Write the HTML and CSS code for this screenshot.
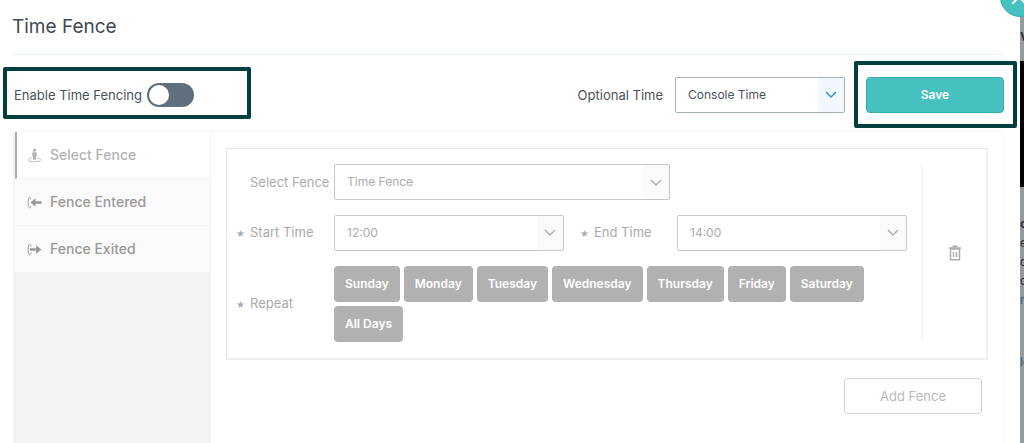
FILE: index.html
```
<!DOCTYPE html>
<html lang="en">
<head>
    <meta charset="UTF-8">
    <meta name="viewport" content="width=device-width, initial-scale=1.0">
    <title>Time Fence</title>
    <link rel="stylesheet" href="styles.css">
</head>
<body>
    <main class="modal">
        <header class="modal-header">
            <h1>Time Fence</h1>
        </header>

        <div class="toolbar">
            <div class="highlight highlight-toggle">
                <label for="enable">Enable Time Fencing</label>
                <input type="checkbox" id="enable" class="toggle" role="switch">
            </div>
            <div class="toolbar-right">
                <label for="optional-time">Optional Time</label>
                <div class="select select-active">
                    <select id="optional-time">
                        <option>Console Time</option>
                    </select>
                    <svg viewBox="0 0 26 34"><path d="M8 14l5 5 5-5"/></svg>
                </div>
                <div class="highlight highlight-save">
                    <button type="button" class="btn-save">Save</button>
                </div>
            </div>
        </div>

        <section class="panel">
            <nav class="tabs">
                <button type="button" class="tab active">
                    <svg viewBox="0 0 16 16">
                        <circle cx="8" cy="2.3" r="1.7"/>
                        <path d="M6.2 4.4h3.6l.6.6v4H9.7v3.6H6.3V9h-.7V5z"/>
                        <path class="line" d="M5 10.800c-2.200.4-3.700 1-3.700 1.800 0 1.200 3 2 6.700 2s6.700-.8 6.700-2c0-.8-1.500-1.400-3.700-1.800"/>
                    </svg>
                    Select Fence
                </button>
                <button type="button" class="tab">
                    <svg viewBox="0 0 16 16">
                        <path class="line" d="M4 4.200C3.600 1 1.200 1.400 1.200 8s2.400 7 2.800 3.800"/>
                        <path d="M3.600 8l5.400-4.600v3.200h6.500v2.800H9v3.200z"/>
                    </svg>
                    Fence Entered
                </button>
                <button type="button" class="tab">
                    <svg viewBox="0 0 16 16">
                        <path class="line" d="M4.400 5C3.800 1 1.200 1.400 1.200 8s2.600 7 3.200 3"/>
                        <path d="M15.300 8L9.800 3.400v3.200H3v2.800h6.800v3.200z"/>
                    </svg>
                    Fence Exited
                </button>
            </nav>

            <div class="content">
                <div class="card">
                    <form class="fence-form">
                        <div class="row">
                            <label class="row-label" for="fence">Select Fence</label>
                            <div class="select select-fence">
                                <select id="fence">
                                    <option>Time Fence</option>
                                </select>
                                <svg viewBox="0 0 26 34"><path d="M8 15l5 5 5-5"/></svg>
                            </div>
                        </div>
                        <div class="row">
                            <label class="row-label required" for="start">Start Time</label>
                            <div class="select">
                                <select id="start">
                                    <option>12:00</option>
                                </select>
                                <svg viewBox="0 0 26 34"><path d="M8 14l5 5 5-5"/></svg>
                            </div>
                            <label class="row-label row-label-end required" for="end">End Time</label>
                            <div class="select">
                                <select id="end">
                                    <option>14:00</option>
                                </select>
                                <svg viewBox="0 0 26 34"><path d="M8 14l5 5 5-5"/></svg>
                            </div>
                        </div>
                        <div class="row">
                            <span class="row-label required" id="repeat">Repeat</span>
                            <div class="days" role="group" aria-labelledby="repeat">
                                <button type="button">Sunday</button>
                                <button type="button">Monday</button>
                                <button type="button">Tuesday</button>
                                <button type="button">Wednesday</button>
                                <button type="button">Thursday</button>
                                <button type="button">Friday</button>
                                <button type="button">Saturday</button>
                                <button type="button">All Days</button>
                            </div>
                        </div>
                    </form>
                    <div class="card-actions">
                        <button type="button" class="btn-delete" aria-label="Delete">
                            <svg viewBox="0 0 12 16">
                                <path d="M1.500 4h9v10.700h-9zM0 3h12M3.500 1.200h5M4.500 7v5M7.500 7v5"/>
                            </svg>
                        </button>
                    </div>
                </div>
                <button type="button" class="btn-add">Add Fence</button>
            </div>
        </section>

        <button type="button" class="btn-close" aria-label="Close">
            <svg viewBox="0 0 12 12"><path d="M1 1l10 10M11 1L1 11"/></svg>
        </button>
    </main>

    <!-- Page behind the modal -->
    <aside class="backdrop">
        <b class="backdrop-title">V</b>
        <div class="backdrop-media"></div>
        <div class="backdrop-text">
            <b>o</b>
            <span>ev</span>
            <span>o</span>
            <span>o</span>
            <a href="#">ri</a>
        </div>
        <div class="backdrop-footer"><a href="#">l</a>o</div>
    </aside>
</body>
</html>
```

FILE: styles.css
```
* {
    box-sizing: border-box;
}
body {
    margin: 0;
    display: flex;
    min-height: 100vh;
    overflow: hidden;
    font-family: Inter, "Open Sans", sans-serif;
    font-size: 13px;
    line-height: 16px;
    color: #4a525c;
    background-color: #fff;
}
button, select {
    font: inherit;
    color: inherit;
}
button {
    cursor: pointer;
}
.modal {
    position: relative;
    flex: 1;
    min-width: 0;
    display: flex;
    flex-direction: column;
    background-color: #fff;
}
.modal-header {
    margin: 0 16px 0 12px;
    padding: 15px 0;
    border-bottom: 1px solid #e9f2f7;
}
.modal-header h1 {
    margin: 0;
    font-size: 19px;
    line-height: 24px;
    font-weight: 400;
    color: #3f4852;
}

/* Toolbar */
.toolbar {
    display: flex;
    align-items: center;
    justify-content: space-between;
    padding: 6px 3px 3px;
}
.toolbar-right {
    display: flex;
    align-items: center;
}
.toolbar-right .select {
    width: 170px;
    margin: 0 9px 0 12px;
}
.highlight {
    border: 4px solid #003f3f;
    border-radius: 2px;
}
.highlight-toggle {
    display: flex;
    align-items: center;
    justify-content: space-between;
    width: 248px;
    height: 52px;
    margin-bottom: 3px;
    padding: 3px 53px 0 7px;
}
.highlight-save {
    padding: 12px 9px 11px 8px;
}
.toggle {
    appearance: none;
    width: 47px;
    height: 24px;
    margin: 0;
    padding: 2px;
    border-radius: 12px;
    background-color: #5f6f7e;
    cursor: pointer;
}
.toggle::before {
    content: '';
    display: block;
    width: 20px;
    height: 20px;
    border-radius: 50%;
    background-color: #fff;
}
.toggle:checked::before {
    margin-left: auto;
}
.btn-save {
    display: block;
    width: 138px;
    height: 36px;
    border: 1px solid #35adad;
    border-radius: 4px;
    background-color: #47c1bf;
    color: #fff;
    font-size: 12px;
    font-weight: 600;
}

/* Select boxes */
.select {
    display: grid;
    grid-template-columns: 1fr 26px;
    height: 36px;
    border: 1px solid #c6c6c6;
    border-radius: 2px;
    overflow: hidden;
    background-color: #fff;
}
.select select {
    grid-area: 1 / 1 / 2 / 3;
    appearance: none;
    min-width: 0;
    padding: 0 32px 0 12px;
    border: 0;
    background: none;
    font-size: 12px;
}
.select svg {
    grid-area: 1 / 2;
    width: 26px;
    height: 34px;
    background-color: #fafafa;
    fill: none;
    stroke: #adadad;
    stroke-width: 1.4;
    pointer-events: none;
}
.select-active {
    border-color: #a5afbb;
}
.select-active svg {
    background-color: #f2f8fe;
    stroke: #2b8fdc;
}

/* Panel with tabs */
.panel {
    flex: 1;
    display: flex;
    margin: 0 16px 0 13px;
    border: 1px solid #f5f5f5;
    border-bottom: 0;
    color: #ababab;
}
.tabs {
    width: 197px;
    background-color: #f3f3f3;
    border-right: 1px solid #f3f3f3;
    border-left: 1px solid #f3f3f3;
}
.tab {
    display: flex;
    align-items: center;
    gap: 8px;
    width: 100%;
    height: 47px;
    padding: 0 0 0 12px;
    border: 0;
    border-bottom: 1px solid #f3f3f3;
    background-color: #fafafa;
    color: #999;
    font-size: 14px;
    font-weight: 500;
}
.tab.active {
    padding-left: 10px;
    border-left: 2px solid #acacac;
    background-color: #fff;
    color: #b3b3b3;
}
.tab svg {
    width: 15px;
    height: 15px;
    fill: currentColor;
}
.tab .line {
    fill: none;
    stroke: currentColor;
    stroke-width: 1;
}
.content {
    flex: 1;
    min-width: 0;
    padding: 16px 15px 16px 15px;
}

/* Fence card */
.card {
    display: flex;
    padding: 15px 0 16px;
    border: 1px solid #e6e6e6;
    border-width: 1px 2px 2px 1px;
    border-color: #e6e6e6 #efefef #efefef #e6e6e6;
}
.fence-form {
    flex: 1;
    display: flex;
    flex-direction: column;
    gap: 15px;
    padding: 0 15px 0 9px;
    border-right: 1px solid #f0f0f0;
}
.row {
    display: flex;
    align-items: center;
}
.row .select {
    flex: 1;
}
.row .select-fence {
    flex: 0 1 336px;
}
.row-label {
    flex: none;
    width: 98px;
    padding-left: 14px;
}
.row-label-end {
    width: 97px;
    margin-left: 16px;
}
.required {
    padding-left: 0;
}
.required::before {
    content: '★';
    display: inline-block;
    width: 14px;
    font-family: "DejaVu Sans", sans-serif;
    font-size: 10px;
}
.days {
    display: flex;
    flex-wrap: wrap;
    gap: 4px;
}
.days button {
    height: 36px;
    padding: 0 11px;
    border: 0;
    border-radius: 4px;
    background-color: #b1b1b1;
    color: #fff;
    font-size: 12px;
    font-weight: 600;
}
.card-actions {
    display: flex;
    align-items: center;
    justify-content: center;
    width: 63px;
}
.btn-delete {
    display: flex;
    padding: 0;
    border: 0;
    background: none;
}
.btn-delete svg {
    width: 12px;
    height: 16px;
    fill: none;
    stroke: #adadad;
    stroke-width: 1.5;
}
.btn-add {
    display: block;
    width: 138px;
    height: 36px;
    margin: 18px 6px 0 auto;
    border: 1px solid #d0d0d0;
    border-radius: 4px;
    background-color: #fff;
    color: #b9b9b9;
}

/* Close button sits over the modal corner */
.btn-close {
    position: absolute;
    top: -23px;
    right: -20px;
    display: flex;
    align-items: center;
    justify-content: center;
    width: 40px;
    height: 40px;
    padding: 0 3px 0 0;
    border: 1px solid #35adad;
    border-radius: 50%;
    background-color: #47c1bf;
    z-index: 1;
}
.btn-close svg {
    width: 16px;
    height: 16px;
    fill: none;
    stroke: #fff;
    stroke-width: 1.5;
}

.backdrop {
    width: 4px;
    overflow: hidden;
    background-color: #949a9d;
    box-shadow: 0 0 2px #777;
    font-size: 12px;
    line-height: 19px;
    color: #2b2f38;
}
.backdrop a {
    color: #2a5f8f;
    text-decoration: none;
}
.backdrop-title {
    display: block;
    padding: 27px 0 15px;
}
.backdrop-media {
    height: 126px;
    margin-bottom: 27px;
    background-color: #000;
}
.backdrop-text {
    display: flex;
    flex-direction: column;
}
.backdrop-footer {
    margin-top: 43px;
    white-space: nowrap;
}
```
